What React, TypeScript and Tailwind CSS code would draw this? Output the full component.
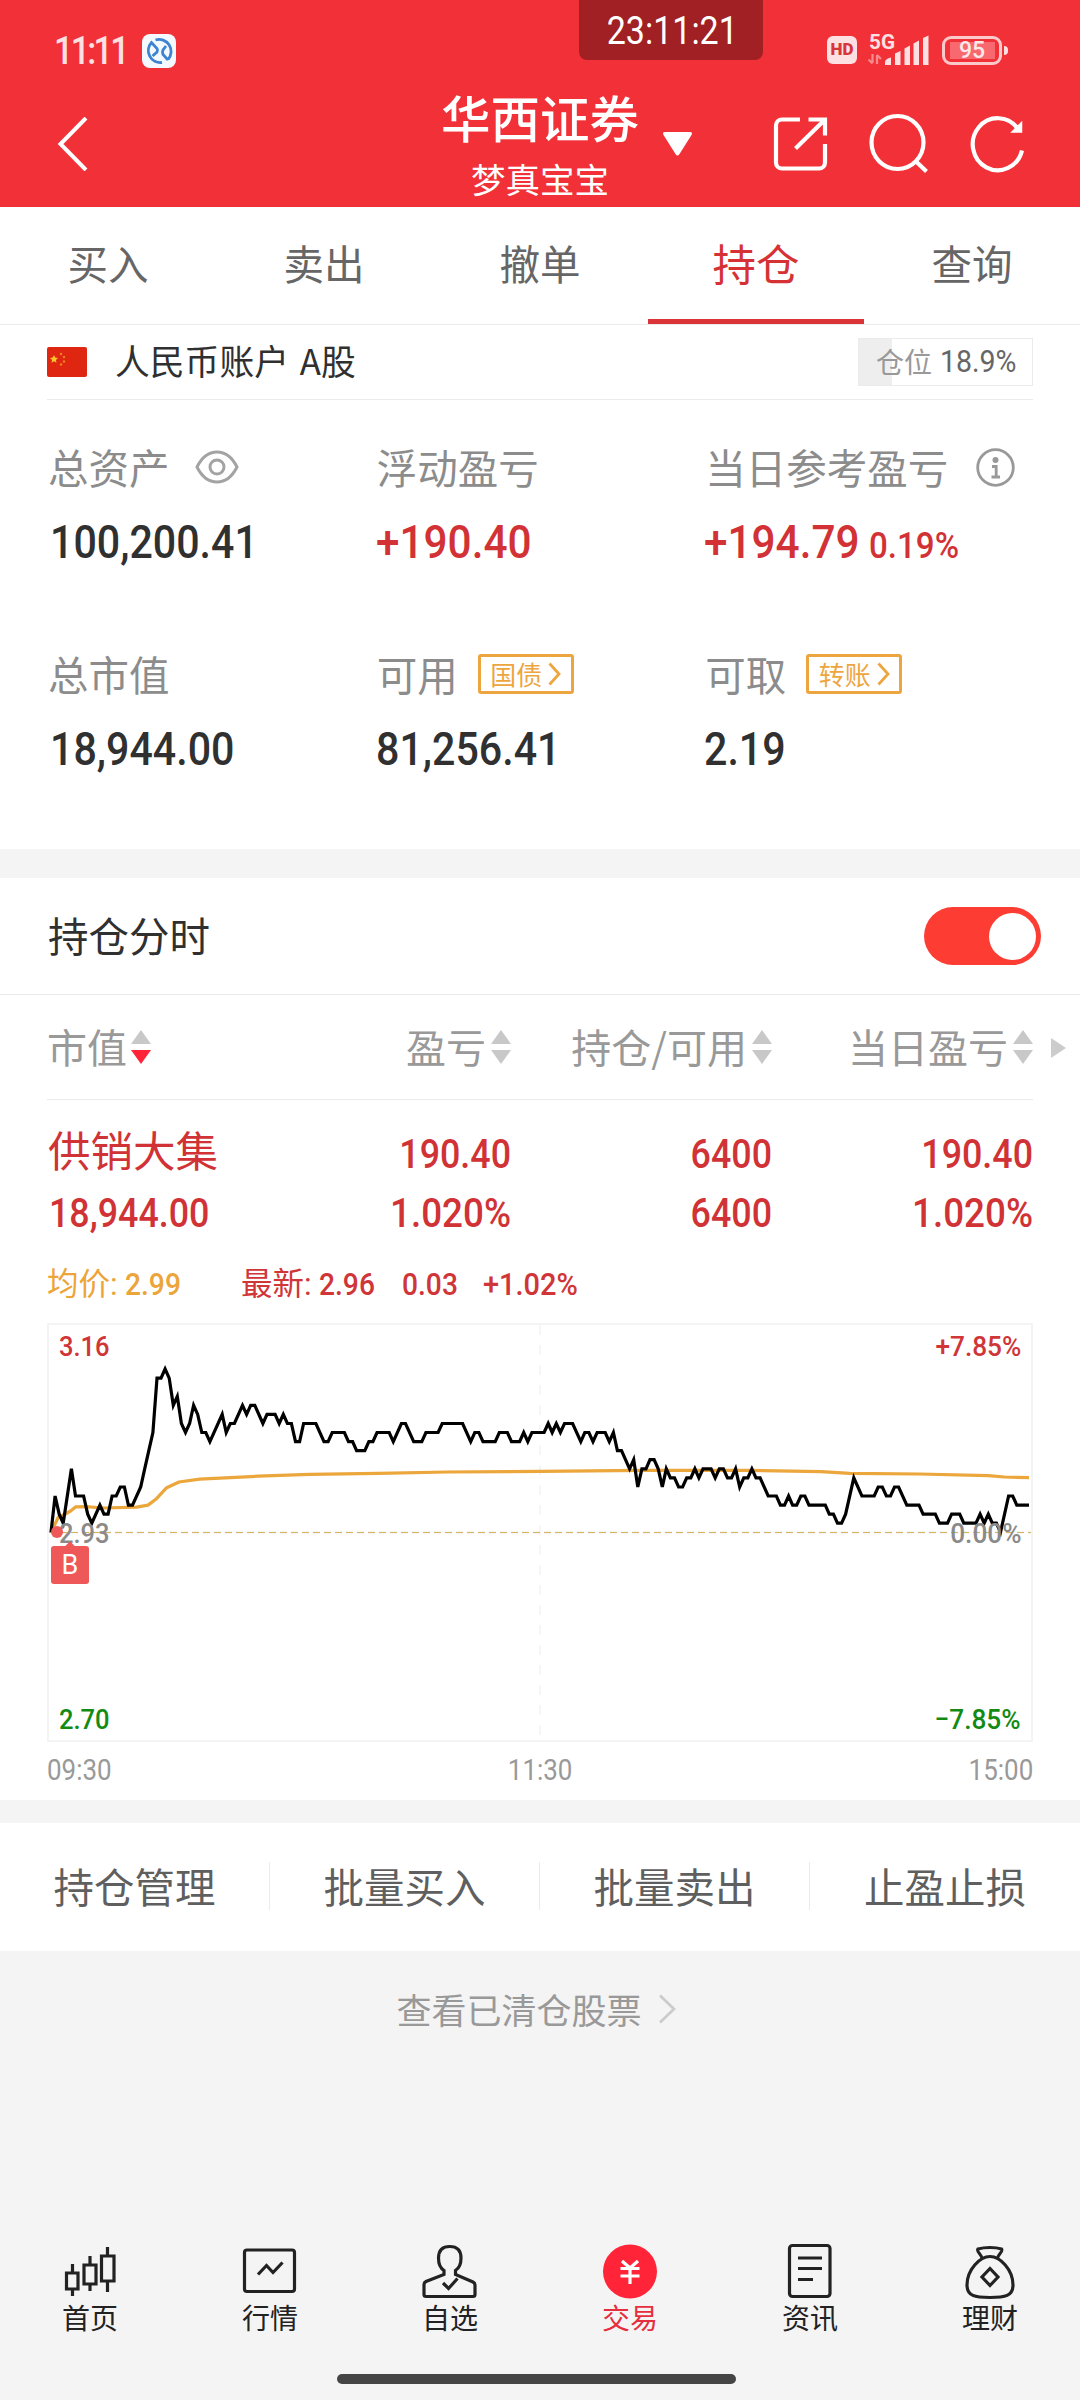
import React, { useState } from "react";

const CJK = "font-['Noto_Sans_CJK_SC',sans-serif]";
const DIN = "font-['Roboto','Noto_Sans_CJK_SC',sans-serif]";

// [minute since open, ticks above previous close]
const PRICE: [number, number][] = [
    [0, 0], [1, 4], [2, 2], [3, 1], [4, 4], [5, 7], [6, 4], [8, 4], [9, 2], [10, 1], [12, 3], [13, 2], [14, 2], [15, 4], [16, 4],
    [17, 5], [18, 5], [19, 3], [20, 3], [22, 5], [23, 7], [24, 9], [25, 11], [26, 17], [27, 17], [28, 18], [29, 17], [30, 14],
    [31, 15], [32, 12], [33, 11], [34, 12], [35, 14], [36, 13], [37, 11], [38, 11], [39, 10], [42, 13], [43, 11], [44, 12], [45, 12],
    [47, 14], [48, 13], [49, 14], [50, 14], [52, 12], [53, 13], [55, 13], [56, 12], [57, 13], [58, 12], [59, 12], [60, 10], [61, 10],
    [62, 12], [65, 12], [67, 10], [68, 10], [69, 11], [72, 11], [73, 10], [74, 10], [75, 9], [77, 9], [78, 10], [79, 10], [80, 11],
    [83, 11], [84, 10], [86, 12], [87, 12], [89, 10], [91, 10], [92, 11], [95, 11], [96, 12], [101, 12], [103, 10], [104, 11],
    [105, 11], [106, 10], [109, 10], [110, 11], [112, 11], [113, 10], [115, 10], [116, 11], [117, 10], [118, 11], [121, 11],
    [122, 12], [123, 11], [124, 12], [125, 11], [126, 12], [128, 12], [130, 10], [131, 11], [132, 11], [133, 10], [134, 11],
    [136, 11], [137, 10], [138, 11], [139, 9], [140, 9], [142, 7], [143, 8], [144, 5], [145, 7], [146, 7], [147, 8], [148, 8],
    [149, 7], [150, 5], [151, 7], [152, 6], [153, 6], [154, 5], [155, 5], [156, 6], [157, 6], [158, 7], [159, 6], [160, 7],
    [162, 7], [163, 6], [164, 7], [165, 7], [166, 6], [167, 6], [168, 7], [169, 5], [170, 6], [171, 6], [172, 7], [173, 6],
    [174, 6], [176, 4], [178, 4], [179, 3], [180, 3], [181, 4], [182, 3], [183, 3], [184, 4], [185, 4], [186, 3], [190, 3],
    [191, 2], [192, 2], [193, 1], [194, 1], [195, 2], [197, 6], [199, 4], [202, 4], [203, 5], [204, 5], [205, 4], [206, 4],
    [207, 5], [208, 5], [210, 3], [213, 3], [214, 2], [217, 2], [218, 1], [220, 1], [221, 2], [223, 2], [224, 1], [227, 1],
    [228, 2], [229, 1], [230, 2], [231, 1], [232, 1], [233, 0], [235, 4], [236, 4], [237, 3], [240, 3],
];

const AVERAGE: [number, number][] = [
    [0, 0], [1.8, 1.65], [3.5, 2.02], [4.8, 2.35], [6, 2.8], [8.5, 2.83], [12.8, 2.68], [21, 2.78], [23.8, 3], [25.9, 3.7],
    [28.4, 4.92], [31.4, 5.55], [36.5, 5.85], [50.8, 6.18], [63.5, 6.4], [80.4, 6.5], [97.3, 6.65], [120, 6.73], [145, 6.83],
    [171, 6.83], [189, 6.69], [196, 6.5], [213, 6.43], [230, 6.25], [234, 6.1], [240, 6.03],
];

const toPoints = (series: [number, number][]) =>
    series.map(([m, t]) => `${(4 + m * 4.075).toFixed(1)},${(209.3 - t * 9.07).toFixed(1)}`).join(" ");

// Figures are set slightly condensed, signed and percent values a bit less so
function Num({ children, from = "left", className = "" }: { children: string; from?: "left" | "right" | "center"; className?: string }) {
    const origin = { left: "origin-left", right: "origin-right", center: "origin-center" }[from];
    const squeeze = /[+−%]/.test(children) ? "scale-x-[0.92]" : "scale-x-[0.895]";
    return <span className={`inline-block whitespace-nowrap ${origin} ${squeeze} ${className}`}>{children}</span>;
}

function StatusBar() {
    return (
        <div className="relative flex h-[94px] items-start px-[54px]">
            <div className={`mt-[30px] w-[68px] text-[38px] leading-[42px] tracking-[-3px] text-[#fde0e1] font-medium ${DIN}`}>
                <Num>11:11</Num>
            </div>
            <svg className="mt-[34px] ml-[20px]" width="34" height="34" viewBox="0 0 34 34" fill="none">
                <rect width="34" height="34" rx="8" fill="#f3f9fe" />
                <g stroke="#3d83d0" strokeWidth="2.8">
                    <path d="M13.500 6A12 12 0 0 1 26 25.500" />
                    <path d="M20 28.500A12 12 0 0 1 9.500 8.500l5.500 6a3.500 3.500 0 0 1 0 3.500L10.500 22" />
                    <path d="M26 26l-5-5.500a5 5 0 0 1 0-4.500l3-4" />
                </g>
            </svg>
            <div className={`absolute top-0 left-[579px] flex h-[60px] w-[184px] items-center justify-center rounded-b-lg bg-[#a02024] pt-[2px] pl-[2px] text-[38px] leading-[44px] text-white ${DIN}`}>
                <Num from="center">23:11:21</Num>
            </div>
            <div className="mt-[34px] ml-auto mr-[18px] flex h-[32px] items-center">
                <span className={`flex h-[28px] w-[30px] items-center justify-center rounded-[6px] bg-[#fde0e1] text-[17px] font-black text-[#d8353b] ${DIN}`}>HD</span>
                <svg className="ml-[10px] overflow-visible" width="64" height="34" viewBox="0 0 64 34" fill="#fde0e1">
                    <text x="2" y="16" fontSize="20" fontWeight="700" fontFamily="Roboto" textLength="26" lengthAdjust="spacingAndGlyphs">5G</text>
                    <path d="M18 29q0-3 6-4.500V32h-6zM28 20.500l5.500-2.500V32H28zM37.500 15.500l5.500-3V32h-5.500zM46.500 10.500l5.500-3V32h-5.500zM56 5l5.500-2.500V32H56z" />
                    <path d="M5.500 21v9M1.500 26.500l4 4M10 31v-9M10 22l4 4" stroke="#f88a8e" strokeWidth="2.200" fill="none" />
                </svg>
                <div className="ml-[11px] flex h-[29px] w-[60px] items-center justify-center rounded-[9px] border-[3px] border-[#fcc9cb]">
                    <span className={`flex h-[17px] w-[45px] items-center justify-center bg-[#f7696f] text-[23px] font-medium leading-none text-[#fde8e9] ${DIN}`}>95</span>
                </div>
                <span className="ml-[2px] h-[9px] w-[4px] rounded-r bg-[#fde0e1]" />
            </div>
        </div>
    );
}

function Header() {
    return (
        <header className="h-[207px] bg-[#f23037]">
            <StatusBar />
            <div className="grid h-[113px] grid-cols-[442px_196px_1fr] text-white">
                <svg className="mt-[23px] ml-[54px]" width="36" height="54" viewBox="0 0 36 54" fill="none" stroke="currentColor" strokeWidth="4">
                    <path d="M32 1L6.500 27 32 53" />
                </svg>
                <div className="-mt-[2px] flex flex-col items-center whitespace-nowrap">
                    <div className="text-[49.500px] leading-[50px] font-medium">华西证券</div>
                    <div className="mt-[14px] text-[34.500px] leading-[44px]">梦真宝宝</div>
                </div>
                <div className="flex">
                    <svg className="mt-[37px] ml-[24px]" width="31" height="26" viewBox="0 0 31 26" fill="currentColor">
                        <path d="M3 1h25q3 0 1.500 3L17.500 23q-2 3-4 0L1.500 4Q0 1 3 1z" />
                    </svg>
                    <svg className="mt-[19px] ml-[77px]" width="60" height="60" viewBox="0 0 60 60" fill="none" stroke="currentColor" strokeWidth="4.200">
                        <path d="M30 6.500H12a6 6 0 0 0-6 6v37a6 6 0 0 0 6 6h37a6 6 0 0 0 6-6V31" />
                        <path d="M38.500 6.500H55V22.500M54 7.500L25.500 35.500" />
                    </svg>
                    <svg className="mt-[19px] ml-[38px]" width="60" height="60" viewBox="0 0 60 60" fill="none" stroke="currentColor" strokeWidth="4.200">
                        <ellipse cx="29.500" cy="29.500" rx="26" ry="26.500" />
                        <path d="M47 47.500L58.500 58.500" />
                    </svg>
                    <svg className="mt-[19px] ml-[40px]" width="60" height="60" viewBox="0 0 60 60" fill="none" stroke="currentColor" strokeWidth="4.200">
                        <path d="M54 37.500A25 26 0 1 1 50 16" />
                        <path d="M53.500 9.500V19H44z" fill="currentColor" strokeWidth="1.500" />
                    </svg>
                </div>
            </div>
        </header>
    );
}

function Tabs() {
    const [active, setActive] = useState("持仓");
    return (
        <nav className="grid h-[118px] grid-cols-5 border-b border-[#ebebeb]">
            {["买入", "卖出", "撤单", "持仓", "查询"].map((tab) => (
                <button
                    key={tab}
                    onClick={() => setActive(tab)}
                    className={`border-b-[5px] leading-[112px] ${tab === active ? "border-[#da3338] text-[43.500px] text-[#d63235]" : "border-transparent text-[40.500px] text-[#666]"}`}
                >
                    {tab}
                </button>
            ))}
        </nav>
    );
}

function Tag({ children }: { children: React.ReactNode }) {
    return (
        <span className="ml-[20px] flex h-[40px] w-[96px] items-center justify-center gap-[6px] rounded-[3px] border-[3px] border-[#eda63f] text-[26px] leading-none text-[#eda63f]">
            {children}
            <svg width="13" height="24" viewBox="0 0 13 24" fill="none" stroke="currentColor" strokeWidth="2.800">
                <path d="M1.500 1.500L11 12 1.500 22.500" />
            </svg>
        </span>
    );
}

interface StatProps {
    label: string;
    value: string;
    extra?: React.ReactNode;
    suffix?: string;
    up?: boolean;
}

function Stat({ label, value, extra, suffix, up }: StatProps) {
    return (
        <div className="h-[207px]">
            <div className="flex h-[44px] items-center pl-px text-[40.500px] leading-[44px] whitespace-nowrap text-[#8c8c8c]">
                {label}
                {extra}
            </div>
            <div className={`mt-[28px] flex items-baseline text-[46px] leading-[50px] font-medium ${up ? "text-[#d23235]" : "text-[#303030]"} ${DIN}`}>
                <Num className={value.startsWith("1") ? "ml-[3px]" : ""}>{value}</Num>
                {suffix && <Num className="-ml-[4px] text-[36px]">{suffix}</Num>}
            </div>
        </div>
    );
}

function Account() {
    return (
        <section className="h-[524px] px-[47px]">
            <div className="flex h-[75px] items-center border-b border-[#ebebeb]">
                <svg width="40" height="30" viewBox="0 0 40 30">
                    <rect width="40" height="30" rx="2" fill="#df2610" />
                    <path d="M7 8l1.200 2.600 2.800.3-2.100 2 .6 2.900L7 14.300l-2.500 1.500.6-2.900-2.100-2 2.800-.3z" fill="#fbc52c" />
                    <g fill="#ee8420">
                        <circle cx="14" cy="7" r="1.200" />
                        <circle cx="17" cy="10" r="1.200" />
                        <circle cx="17" cy="14.500" r="1.200" />
                        <circle cx="14" cy="17.500" r="1.200" />
                    </g>
                </svg>
                <span className="mb-[4px] ml-[28px] text-[34.800px] leading-[40px] [word-spacing:3px] text-[#303030]">人民币账户 A股</span>
                <div className="ml-auto flex h-[48px] w-[175px] items-center border border-[#ebebeb] bg-linear-to-r from-[#eee] from-[18.900%] to-white to-[18.900%] pl-[17px] text-[28px] whitespace-nowrap">
                    <span className="mb-[2px] text-[#999]">仓位</span>
                    <Num className={`ml-[8px] text-[31px] text-[#666] ${DIN}`}>18.9%</Num>
                </div>
            </div>
            <div className="grid grid-cols-3 pt-[45px]">
                <Stat
                    label="总资产"
                    value="100,200.41"
                    extra={
                        <svg className="ml-[25px]" width="44" height="34" viewBox="0 0 44 34" fill="none" stroke="#a3a3a3" strokeWidth="3">
                            <path d="M2 17C7 7 14 2 22 2s15 5 20 15c-5 10-12 15-20 15S7 27 2 17z" />
                            <circle cx="22" cy="17" r="7" />
                        </svg>
                    }
                />
                <Stat label="浮动盈亏" value="+190.40" up />
                <Stat
                    label="当日参考盈亏"
                    value="+194.79"
                    suffix="0.19%"
                    up
                    extra={
                        <svg className="ml-[28px]" width="39" height="39" viewBox="0 0 39 39" fill="none" stroke="#999" strokeWidth="2.800">
                            <circle cx="19.500" cy="19.500" r="17.800" />
                            <circle cx="19.500" cy="12" r="3" fill="#999" stroke="none" />
                            <path d="M16 18.500h4.200v10M15.500 29h8.500" />
                        </svg>
                    }
                />
                <Stat label="总市值" value="18,944.00" />
                <Stat label="可用" value="81,256.41" extra={<Tag>国债</Tag>} />
                <Stat label="可取" value="2.19" extra={<Tag>转账</Tag>} />
            </div>
        </section>
    );
}

function SortHeader({ label, desc }: { label: string; desc?: boolean }) {
    return (
        <div className={`flex items-center whitespace-nowrap ${desc ? "gap-[4px]" : "justify-end gap-[5px]"}`}>
            <span className="-mt-[2px]">{label}</span>
            <svg width="20" height="34" viewBox="0 0 20 34" fill="#c8c8c8">
                <path d="M10 0l10 14H0z" />
                <path d="M10 34L0 20h20z" fill={desc ? "#ff2438" : "#c8c8c8"} />
            </svg>
        </div>
    );
}

function Chart() {
    return (
        <div className={`relative mx-[47px] h-[419px] text-[28.500px] font-medium ${DIN}`}>
            <svg className="block" width="986" height="419" viewBox="0 0 986 419" fill="none">
                <rect x="1" y="1" width="984" height="417" stroke="#f4f4f4" strokeWidth="2" />
                <path d="M493 2v416" stroke="#f3f3f3" strokeWidth="1.500" strokeDasharray="10 10" />
                <path d="M2 209.500h982" stroke="#e0dccf" strokeWidth="1.500" strokeDasharray="7 4" />
                <path d="M2 209.500h982" stroke="#d6b562" strokeDasharray="7 4" />
                <polyline points={toPoints(AVERAGE)} stroke="#eba63c" strokeWidth="3.200" strokeLinejoin="round" />
                <polyline points={toPoints(PRICE)} stroke="#000" strokeWidth="3.200" />
            </svg>
            <div className="absolute inset-0 flex flex-col justify-between px-[12px] pt-[7px] pb-[5px] leading-[34px]">
                <div className="flex justify-between text-[#d03538]"><Num>3.16</Num><Num from="right">+7.85%</Num></div>
                <div className="flex justify-between text-[#8a8a8a]"><Num>2.93</Num><Num from="right">0.00%</Num></div>
                <div className="flex justify-between text-[#138a13]"><Num>2.70</Num><Num from="right">−7.85%</Num></div>
            </div>
            <span className="absolute top-[203px] left-[4px] size-[12px] rounded-full bg-[#ee5858]" />
            <span className="absolute top-[220px] left-[19px] size-[8px] rotate-45 bg-[#ee5858]" />
            <span className="absolute top-[223px] left-[4px] flex size-[38px] items-center justify-center rounded-[3px] bg-[#ee5858] pt-px text-[27px] font-normal text-white">B</span>
        </div>
    );
}

function Holdings() {
    const [on, setOn] = useState(true);
    return (
        <section className="h-[922px] bg-white">
            <div className="flex h-[117px] items-center justify-between border-b border-[#ebebeb] pr-[39px] pl-[48px]">
                <span className="-mt-[3px] text-[40.500px] leading-[44px] text-[#303030]">持仓分时</span>
                <button
                    onClick={() => setOn(!on)}
                    className={`flex h-[58px] w-[117px] items-center rounded-full px-[5px] ${on ? "justify-end bg-[#fd3d33]" : "bg-gray-300"}`}
                >
                    <span className="size-[47px] rounded-full bg-white" />
                </button>
            </div>
            <div className="flex h-[105px] items-center text-[40px] leading-[44px] text-[#999]">
                <div className="ml-[47px] grid h-full w-[986px] grid-cols-[203px_261px_261px_261px] items-center border-b border-[#ebebeb]">
                    <SortHeader label="市值" desc />
                    <SortHeader label="盈亏" />
                    <SortHeader label="持仓/可用" />
                    <SortHeader label="当日盈亏" />
                </div>
                <svg className="ml-[18px]" width="15" height="20" viewBox="0 0 15 20" fill="#ccc">
                    <path d="M0 0l15 10L0 20z" />
                </svg>
            </div>
            <div className={`grid h-[143px] grid-cols-[203px_261px_261px_261px] px-[47px] pt-[26px] text-right text-[40px] leading-[58px] font-medium text-[#d03235] ${DIN}`}>
                <div className={`-mt-[6px] ml-px text-left text-[42.500px] font-normal whitespace-nowrap ${CJK}`}>供销大集</div>
                <Num from="right">190.40</Num>
                <Num from="right">6400</Num>
                <Num from="right">190.40</Num>
                <Num className="ml-[2px] text-left">18,944.00</Num>
                <Num from="right">1.020%</Num>
                <Num from="right">6400</Num>
                <Num from="right">1.020%</Num>
            </div>
            <div className={`flex h-[80px] items-center px-[47px] pt-[3px] text-[31.500px] font-medium text-[#d03538] ${DIN}`}>
                <span className="w-[194px] text-[#eca53a]"><span className="font-normal">均价: </span><Num>2.99</Num></span>
                <span className="w-[161px]"><span className="font-normal">最新: </span><Num>2.96</Num></span>
                <span className="w-[81px]"><Num>0.03</Num></span>
                <Num>+1.02%</Num>
            </div>
            <Chart />
            <div className={`mx-[47px] mt-[10px] flex justify-between text-[29px] leading-[36px] text-[#999] ${DIN}`}>
                <Num>09:30</Num>
                <Num from="center">11:30</Num>
                <Num from="right">15:00</Num>
            </div>
        </section>
    );
}

const NAV = [
    {
        label: "首页",
        icon: <path d="M18.500 21v9M12.500 30v16h11.500V30zM18.500 46v7M36 13v9M30 22v19h12V22zM36 41v7M53.500 4v9M47.500 13v25H60V13zM53.500 38v11" />,
    },
    { label: "行情", icon: <><rect x="10.500" y="7" width="50" height="41.500" rx="2.500" /><path d="M24 31.500l8.500-9L39 29.500 48.500 19.500" /></> },
    { label: "自选", icon: <path d="M30 27.500v4L12 38.500q-2 1-2 3V51.500q0 2 2 2h47q2 0 2-2v-9.500q0-2-2-3L41.500 31.500v-4Q47 24 47 15q0-11.500-11.200-11.500T24.500 15q0 9 5.500 12.500zM29 40l5.500 5.500 9-10" /> },
    {
        label: "交易",
        active: true,
        icon: <><circle cx="36" cy="28.500" r="27" fill="#ff2438" stroke="none" /><path d="M28 18l8 7 8-7M26.500 25.500h19M26.500 33h19M36 25v16" stroke="#fff" strokeWidth="3.200" /></>,
    },
    { label: "资讯", icon: <><rect x="15.500" y="2.500" width="40.500" height="51" rx="3" /><path d="M24 15h24M24 25.500h24M24 36.500h15" /></> },
    {
        label: "理财",
        icon: <><path d="M28 15c-1-4-6-7-4-9q5-1.500 12-1.500T47.500 6c2 2-3 5-4 9" /><path d="M36 13.500c10 0 23 13 23 28.500 0 11-8 12.500-23 12.500S13 53 13 42c0-15.500 13-28.500 23-28.500z" /><path d="M36 25.500l8 8.500-8 8.500-8-8.500z" /></>,
    },
];

function BottomNav() {
    return (
        <footer className="mt-auto h-[158px]">
            <div className="grid grid-cols-6 pt-px">
                {NAV.map((n) => (
                    <div key={n.label} className={`flex flex-col items-center text-[28px] leading-[32px] ${n.active ? "text-[#e62e3f]" : "text-[#222]"}`}>
                        <svg width="72" height="58" viewBox="0 0 72 58" fill="none" stroke="#222" strokeWidth="3.200">
                            {n.icon}
                        </svg>
                        <span>{n.label}</span>
                    </div>
                ))}
            </div>
            <div className="mt-[41px] ml-[337px] h-[10px] w-[399px] rounded-full bg-[#454545]" />
        </footer>
    );
}

export default function App() {
    return (
        <div className={`flex h-[2400px] w-[1080px] flex-col overflow-hidden bg-[#f4f4f4] ${CJK}`}>
            <Header />
            <div className="bg-white">
                <Tabs />
                <Account />
            </div>
            <div className="h-[29px]" />
            <Holdings />
            <div className="mt-[23px] grid h-[128px] grid-cols-4 items-center bg-white pb-[3px] text-center text-[40.500px] text-[#5f5f5f]">
                {["持仓管理", "批量买入", "批量卖出", "止盈止损"].map((item) => (
                    <div key={item} className="border-r border-[#ebebeb] leading-[48px] last:border-r-0">{item}</div>
                ))}
            </div>
            <div className="mt-[35px] flex items-center justify-center gap-[16px] pr-[8px] text-[35px] leading-[46px] text-[#999]">
                查看已清仓股票
                <svg width="18" height="30" viewBox="0 0 18 30" fill="none" stroke="#ccc" strokeWidth="2.800">
                    <path d="M2 1.500L16 15 2 28.500" />
                </svg>
            </div>
            <BottomNav />
        </div>
    );
}
